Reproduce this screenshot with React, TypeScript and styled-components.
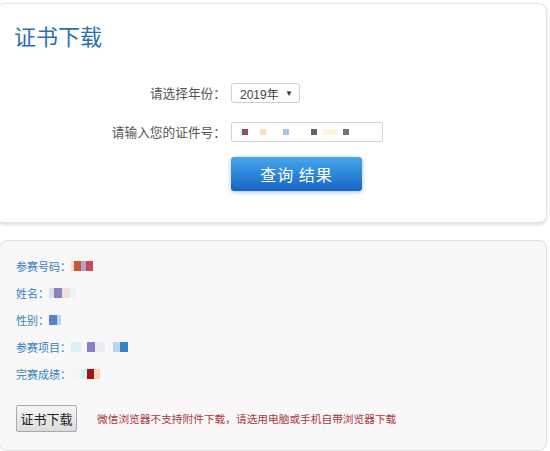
import React from "react";
import styled, { createGlobalStyle } from "styled-components";

const Global = createGlobalStyle`
  html, body { margin: 0; padding: 0; background: #ffffff; }
  body { font-family: "Noto Sans CJK SC", "Noto Sans", "Liberation Sans", sans-serif; }
`;

const Page = styled.div`
  width: 550px;
  height: 451px;
  overflow: hidden;
  display: flex;
  flex-direction: column;
`;

const SearchCard = styled.div`
  margin: 3px 3px 0 -4px;
  padding: 18px 0 31px 17px;
  background: #fff;
  border: 1px solid #e4e4e4;
  border-radius: 8px;
  box-shadow: 0 2px 3px rgba(0, 0, 0, 0.12);
`;

const Title = styled.h2`
  margin: 0;
  font-size: 22px;
  line-height: 26px;
  font-weight: normal;
  color: #2c70b2;
`;

const Form = styled.div`
  margin-top: 35px;
  display: grid;
  grid-template-columns: 212px auto;
  column-gap: 5px;
  row-gap: 19px;
  align-items: center;
  justify-items: start;
`;

const Label = styled.label`
  justify-self: end;
  font-size: 12.7px;
  line-height: 20px;
  color: #555;
`;

const Select = styled.div`
  box-sizing: border-box;
  width: 69px;
  height: 20px;
  border: 1px solid #cfcfcf;
  border-radius: 3px;
  display: flex;
  align-items: center;
  justify-content: space-between;
  padding: 0 6px 0 8px;
  font-size: 12px;
  color: #444;
  background: #fff;
  font-family: "Liberation Sans", "Noto Sans CJK SC", sans-serif;
`;

const Arrow = styled.span`
  font-size: 8px;
  color: #333;
`;

const Input = styled.div`
  box-sizing: border-box;
  width: 152px;
  height: 20px;
  border: 1px solid #d4d4d4;
  border-radius: 2px;
  display: flex;
  align-items: center;
  padding-left: 8px;
  background: #fff;
`;

const Pixels = styled.div<{ $h: number }>`
  display: flex;
  align-items: center;
  height: ${(p) => p.$h}px;
  filter: blur(0.5px);
`;

const Px = styled.span<{ $w: number; $h: number; $c: string }>`
  display: block;
  width: ${(p) => p.$w}px;
  height: ${(p) => p.$h}px;
  background: ${(p) => p.$c};
`;

const QueryButton = styled.button`
  grid-column: 2;
  margin-top: -4px;
  width: 131px;
  height: 34px;
  border: none;
  border-radius: 3px;
  background: linear-gradient(#4aa6ee, #2a83d8 55%, #1a64c4);
  box-shadow: 0 1px 4px rgba(40, 120, 200, 0.45);
  color: #fff;
  font-size: 16px;
  letter-spacing: 1px;
  font-family: "Noto Sans CJK SC", sans-serif;
  padding: 0;
`;

const ResultCard = styled.div`
  margin: 17px 3px 0 -1px;
  padding: 11px 0 18px 16px;
  background: #f9f7f7;
  border: 1px solid #dedede;
  border-radius: 8px;
`;

const InfoRow = styled.div`
  display: flex;
  align-items: center;
  height: 27px;
  font-size: 11px;
  color: #3582c0;
`;

const Footer = styled.div`
  margin-top: 18px;
  display: flex;
  align-items: center;
  gap: 20px;
`;

const DownloadButton = styled.button`
  box-sizing: border-box;
  width: 61px;
  height: 27px;
  border: 1px solid #a9a9a9;
  border-radius: 2px;
  background: linear-gradient(#f6f6f6, #dcdcdc);
  font-size: 13px;
  color: #222;
  padding: 0;
  font-family: "Noto Sans CJK SC", sans-serif;
`;

const Warning = styled.span`
  font-size: 10.7px;
  color: #a83a3a;
`;

type Block = [number, string];

const Blur = ({ blocks, h }: { blocks: Block[]; h: number }) => (
  <Pixels $h={h}>
    {blocks.map(([w, c], i) => (
      <Px key={i} $w={w} $h={h} $c={c} />
    ))}
  </Pixels>
);

const idBlocks: Block[] = [
  [2, "#eee"],
  [6, "#8d4f5f"],
  [12, "transparent"],
  [6, "#f4e3b8"],
  [17, "transparent"],
  [6, "#9fc6ee"],
  [22, "transparent"],
  [6, "#666"],
  [6, "transparent"],
  [14, "#fbf7d8"],
  [6, "transparent"],
  [6, "#7b6b7c"],
];

const rows: { label: string; blocks: Block[] }[] = [
  {
    label: "参赛号码：",
    blocks: [
      [3, "#f3d8cc"],
      [7, "#c4582e"],
      [5, "#b79fd0"],
      [7, "#c84a58"],
    ],
  },
  {
    label: "姓名：",
    blocks: [
      [5, "#dcdcf0"],
      [8, "#8a80c6"],
      [8, "#f3dede"],
      [6, "#eef2f6"],
    ],
  },
  {
    label: "性别：",
    blocks: [
      [8, "#5a80d0"],
      [4, "#b9d6f4"],
    ],
  },
  {
    label: "参赛项目：",
    blocks: [
      [10, "#d9f1f3"],
      [6, "transparent"],
      [8, "#8c80c8"],
      [10, "#eaeef4"],
      [8, "transparent"],
      [7, "#bcd6ee"],
      [8, "#3582c8"],
    ],
  },
  {
    label: "完赛成绩：",
    blocks: [
      [10, "#f4f6f6"],
      [6, "#d8f2ef"],
      [7, "#a01414"],
      [6, "#f8d4b6"],
    ],
  },
];

export default function App() {
  return (
    <Page>
      <Global />
      <SearchCard>
        <Title>证书下载</Title>
        <Form>
          <Label>请选择年份：</Label>
          <Select>
            <span>2019年</span>
            <Arrow>▼</Arrow>
          </Select>
          <Label>请输入您的证件号：</Label>
          <Input>
            <Blur blocks={idBlocks} h={6} />
          </Input>
          <QueryButton>查询 结果</QueryButton>
        </Form>
      </SearchCard>
      <ResultCard>
        {rows.map((r) => (
          <InfoRow key={r.label}>
            <span>{r.label}</span>
            <Blur blocks={r.blocks} h={10} />
          </InfoRow>
        ))}
        <Footer>
          <DownloadButton>证书下载</DownloadButton>
          <Warning>微信浏览器不支持附件下载，请选用电脑或手机自带浏览器下载</Warning>
        </Footer>
      </ResultCard>
    </Page>
  );
}
